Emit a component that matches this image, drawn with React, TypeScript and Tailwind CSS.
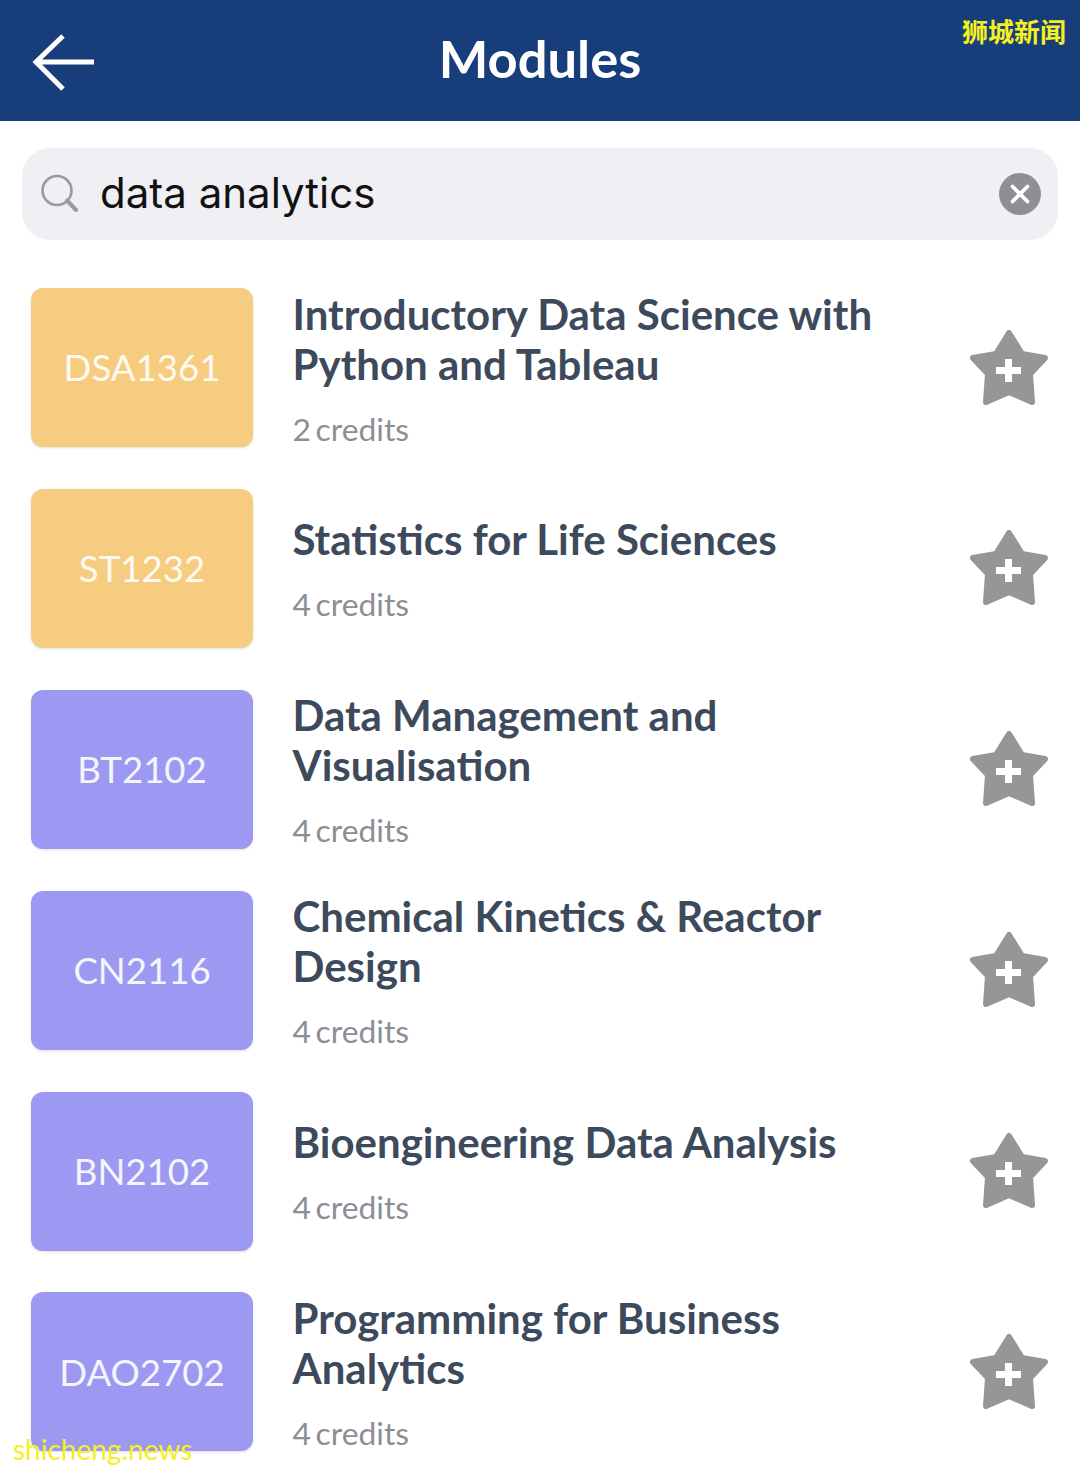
import { X } from "lucide-react";

type Module = {
	code: string;
	title: string[];
	credits: number;
	color: "yellow" | "purple";
};

const modules: Module[] = [
	{ code: "DSA1361", title: ["Introductory Data Science with", "Python and Tableau"], credits: 2, color: "yellow" },
	{ code: "ST1232", title: ["Statistics for Life Sciences"], credits: 4, color: "yellow" },
	{ code: "BT2102", title: ["Data Management and", "Visualisation"], credits: 4, color: "purple" },
	{ code: "CN2116", title: ["Chemical Kinetics & Reactor", "Design"], credits: 4, color: "purple" },
	{ code: "BN2102", title: ["Bioengineering Data Analysis"], credits: 4, color: "purple" },
	{ code: "DAO2702", title: ["Programming for Business", "Analytics"], credits: 4, color: "purple" },
];

const StarPlus = () => (
	<svg width="80" height="80" viewBox="0 0 80 80" className="shrink-0">
		<path
			d="M40 5 L53 26 L76 30 L61 46 L63 74 L40 64 L17 74 L19 46 L4 30 L27 26 Z"
			fill="#969696"
			stroke="#969696"
			strokeWidth="6"
			strokeLinejoin="round"
		/>
		<path d="M39.5 31 V54 M27 42.5 H52" stroke="#ffffff" strokeWidth="7" fill="none" />
	</svg>
);

const BackArrow = () => (
	<svg width="64" height="60" viewBox="0 0 64 60" className="absolute top-[32px] left-[32px]">
		<path
			d="M62 30 H4 M31 4 L4 30 L31 57"
			stroke="#ffffff"
			strokeWidth="5"
			fill="none"
		/>
	</svg>
);

const SearchGlass = () => (
	<svg width="40" height="40" viewBox="0 0 40 40" className="shrink-0">
		<circle cx="17" cy="16.5" r="14.5" stroke="#9a9a9a" strokeWidth="2.6" fill="none" />
		<path d="M27 26.5 L36 36" stroke="#9a9a9a" strokeWidth="4" strokeLinecap="round" />
	</svg>
);

const ModuleRow = ({ module }: { module: Module }) => (
	<div className="flex items-center">
		<div
			className={`flex h-[159px] w-[222px] shrink-0 items-center justify-center rounded-xl text-[36.6px] text-white/90 shadow-sm ${
				module.color === "yellow" ? "bg-[#f6cd80]" : "bg-[#9d99f3]"
			}`}
		>
			{module.code}
		</div>
		<div className="ml-[39.5px] flex-1 pb-[3px]">
			<h3 className="text-[42px] leading-[50px] font-bold text-[#3d4a5c]">
				{module.title.map((line) => (
					<div key={line}>{line}</div>
				))}
			</h3>
			<p className="mt-[25px] text-[31.8px] leading-[30px] [word-spacing:-3.5px] text-[#8a8f96]">
				{module.credits} credits
			</p>
		</div>
		<div className="mr-[31px]">
			<StarPlus />
		</div>
	</div>
);

export default function App() {
	return (
		<div className="relative h-[1470px] w-[1080px] overflow-hidden bg-white font-['Lato',sans-serif]">
			<header className="relative flex h-[121px] items-center justify-center bg-[#173e7a] pb-[4px]">
				<BackArrow />
				<h1 className="text-[52.5px] font-bold text-white">Modules</h1>
				<span className="absolute top-[13px] right-[14px] font-['Noto_Sans_CJK_SC',sans-serif] text-[26px] leading-9 font-bold text-[#f5f01e]">
					狮城新闻
				</span>
			</header>

			<div className="mx-[22px] mt-[27px] flex h-[92px] items-center rounded-[28px] bg-[#f0eff4] pr-[17px] pl-[18px]">
				<SearchGlass />
				<span className="ml-[20px] flex-1 pb-[3px] font-['Inter',sans-serif] text-[42px] text-[#111111]">
					data analytics
				</span>
				<span className="flex h-[42px] w-[42px] items-center justify-center rounded-full bg-[#8e8e93]">
					<X className="text-white" size={30} strokeWidth={3} />
				</span>
			</div>

			<div className="mt-[48px] flex flex-col gap-[41.9px] pl-[31px]">
				{modules.map((module) => (
					<ModuleRow key={module.code} module={module} />
				))}
			</div>

			<span className="absolute bottom-[5px] left-[13px] text-[28px] leading-8 text-[#f5f01e]">
				shicheng.news
			</span>
		</div>
	);
}
